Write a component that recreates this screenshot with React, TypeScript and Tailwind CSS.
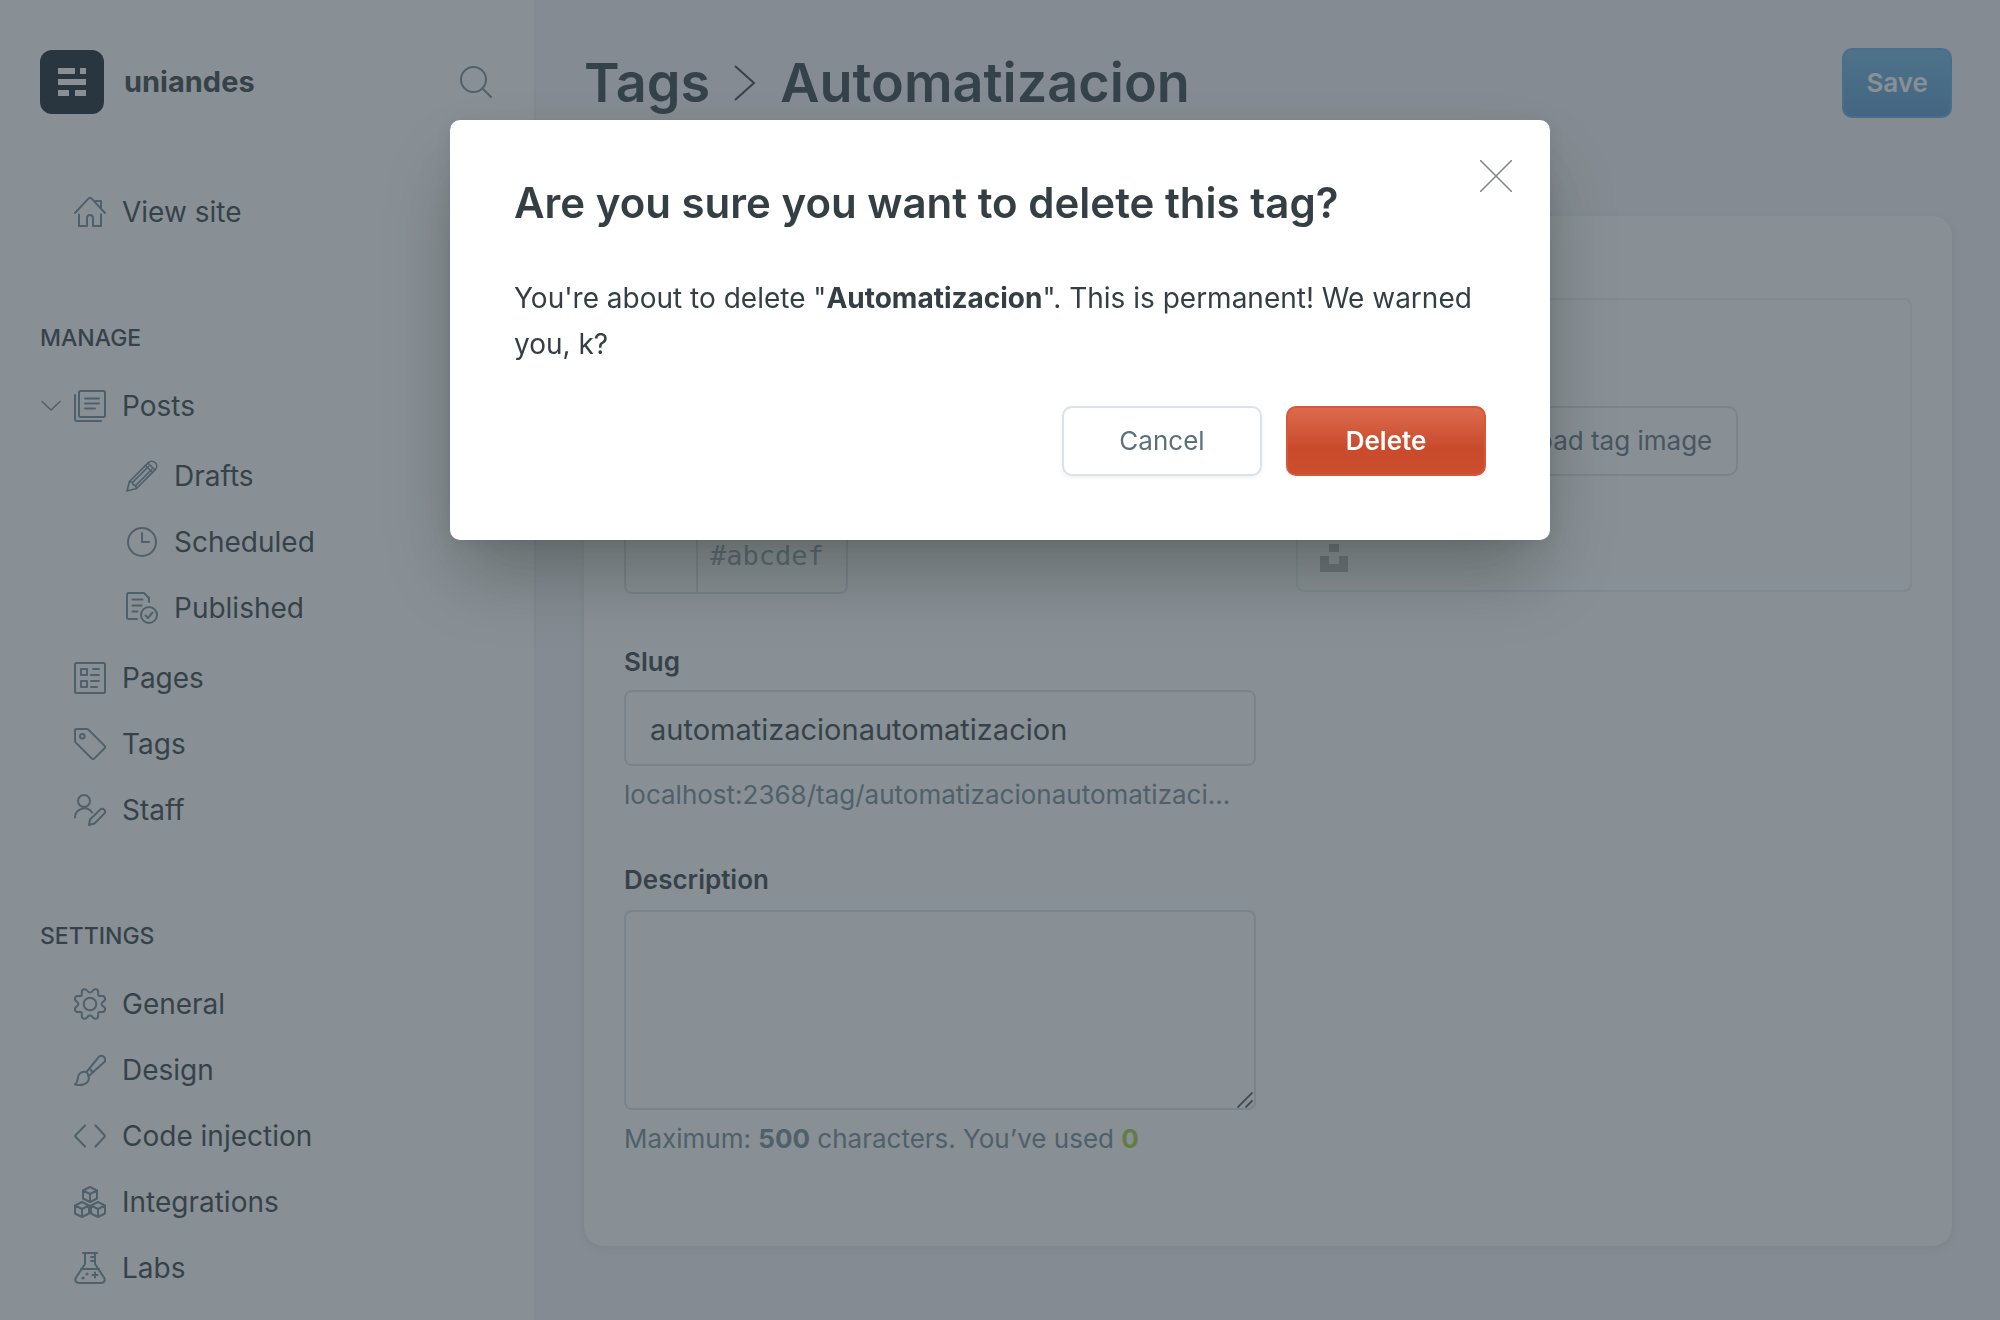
import type { ReactNode } from "react";

function Icon({ children, strokeWidth = 2 }: { children: ReactNode; strokeWidth?: number }) {
  return (
    <svg
      viewBox="0 0 32 32"
      fill="none"
      stroke="currentColor"
      strokeWidth={strokeWidth}
      strokeLinecap="round"
      strokeLinejoin="round"
      aria-hidden="true"
      className="size-8 shrink-0"
    >
      {children}
    </svg>
  );
}

const SearchIcon = () => (
  <Icon>
    <circle cx="13.5" cy="13.5" r="12.5" />
    <path d="M22.500 22.500 31 31" />
  </Icon>
);

const HomeIcon = () => (
  <Icon>
    <path d="M1 17 14.600 2.400a2 2 0 0 1 2.800 0L31 17M5 18.500V30h8v-8a2.500 2.500 0 0 1 6 0v8h8V18.500M21.500 5H27v7" />
  </Icon>
);

const PostsIcon = () => (
  <Icon>
    <rect x="5" y="1" width="26" height="26" rx="1.5" />
    <path d="M1 5v24.500A1.500 1.500 0 0 0 2.500 31H27M11 8.500h14M11 13.500h14M11 18.500h10" />
  </Icon>
);

const PencilIcon = () => (
  <Icon strokeWidth={1.7}>
    <path d="M1 31 3.500 21.500 22.300 2.700a4.950 4.950 0 0 1 7 7L10.500 28.500Z" />
    <path d="M3.500 21.500c2.500.2 3.500.8 3.700 3.300 2.500.2 3.100 1.200 3.300 3.700M6.500 22.500 22.600 6.400M9.600 25.600 25.700 9.500M19.500 5.500l7 7M22 3l7 7" />
  </Icon>
);

const ClockIcon = () => (
  <Icon>
    <circle cx="16" cy="16" r="14" />
    <path d="M16 7v9h7" />
  </Icon>
);

const PublishedIcon = () => (
  <Icon>
    <path d="M11 27H2.500A1.500 1.500 0 0 1 1 25.500v-23A1.500 1.500 0 0 1 2.500 1H18l5 5v4M6.500 7.500h10M6.500 13.500h9M6.500 19.500h5" />
    <circle cx="23" cy="23" r="8" />
    <path d="m19.500 23.500 2.500 2.500 4.500-5.500" />
  </Icon>
);

const PagesIcon = () => (
  <Icon>
    <rect x="1" y="1" width="30" height="30" rx="1.5" />
    <path d="M7 7h6v6H7zM7 19h6v6H7zM19 7h6M17 13h8M17 19h8M17 25h6" />
  </Icon>
);

const TagIcon = () => (
  <Icon>
    <path d="M1 2.500A1.500 1.500 0 0 1 2.500 1H13a2 2 0 0 1 1.400.6L30.400 17.600a2 2 0 0 1 0 2.800l-10 10a2 2 0 0 1-2.800 0L1.600 14.400A2 2 0 0 1 1 13Z" />
    <circle cx="8.3" cy="8.3" r="2.3" />
  </Icon>
);

const StaffIcon = () => (
  <Icon>
    <circle cx="10" cy="7" r="6" />
    <path d="M1 23.500a9.300 9.300 0 0 1 17-5M15 31l1-5.500L26.200 15.600a2.700 2.700 0 0 1 4 4L20.500 29.500Z" />
  </Icon>
);

const GearIcon = () => (
  <Icon>
    <circle cx="16" cy="16" r="6.3" />
    <path d="M16 4.500c1.500 0 2.200-.8 3-2 1-1.800 5-2 5.200 1.200v3c0 1 .2 1.300 1.200 1.300h3c3.200.2 3.400 4 1.200 5.300-1.500.9-2 1.500-2 2.700s.5 1.800 2 2.700c2.200 1.300 2 5.100-1.200 5.300h-3c-1 0-1.200.3-1.200 1.300v3c-.2 3.200-4.200 3-5.200 1.200-.8-1.200-1.500-2-3-2s-2.200.8-3 2c-1 1.800-5 2-5.200-1.200v-3c0-1-.2-1.300-1.200-1.300h-3C.4 23.800.2 20 2.400 18.700c1.500-.9 2-1.500 2-2.700s-.5-1.800-2-2.700C.2 12 .4 8.200 3.600 8h3c1 0 1.200-.3 1.200-1.300v-3C8 .5 12 .7 13 2.500c.8 1.200 1.500 2 3 2Z" />
  </Icon>
);

const BrushIcon = () => (
  <Icon>
    <path d="M12.500 18 25 2.600a3.900 3.900 0 0 1 5.600 5.200L14.800 22M12.500 18c-4-1-8 1-8.500 5-.4 3.500-.5 5.500-3 7.500 5 1.200 9.500.3 12-2 1.600-1.600 2.300-4.300 1.300-6.500a6 6 0 0 0-1.800-4ZM15.500 14.500l3 3.500" />
  </Icon>
);

const CodeIcon = () => (
  <Icon>
    <path d="M11 5.500 1.500 15.200a1.200 1.200 0 0 0 0 1.600L11 26.500M21.500 5.500l9 9.700a1.200 1.200 0 0 1 0 1.600l-9 9.700" />
  </Icon>
);

const CubesIcon = () => (
  <Icon>
    <path d="m16 1 7 3.500v8L16 16l-7-3.500v-8ZM9 4.500 16 8l7-3.500M16 8v8M8 16l7 3.500v8L8 31l-7-3.500v-8ZM1 19.500 8 23l7-3.500M8 23v8M24 16l7 3.500v8L24 31l-7-3.500v-8ZM17 19.500l7 3.500 7-3.500M24 23v8" />
  </Icon>
);

const FlaskIcon = () => (
  <Icon>
    <path d="M9 1h14M11 1v11L2 25.500C.3 28.500 2 31 5 31h22c3 0 4.700-2.500 3-5.500L21 12V1M7 17h18M21 5h-4M21 9h-4M18.500 23h5M21 20.500v5" />
    <circle cx="13" cy="22" r=".6" />
    <circle cx="9" cy="26" r=".6" />
  </Icon>
);

type Item = { label: string; icon: ReactNode; children?: Item[] };

const manage: Item[] = [
  {
    label: "Posts",
    icon: <PostsIcon />,
    children: [
      { label: "Drafts", icon: <PencilIcon /> },
      { label: "Scheduled", icon: <ClockIcon /> },
      { label: "Published", icon: <PublishedIcon /> },
    ],
  },
  { label: "Pages", icon: <PagesIcon /> },
  { label: "Tags", icon: <TagIcon /> },
  { label: "Staff", icon: <StaffIcon /> },
];

const settings: Item[] = [
  { label: "General", icon: <GearIcon /> },
  { label: "Design", icon: <BrushIcon /> },
  { label: "Code injection", icon: <CodeIcon /> },
  { label: "Integrations", icon: <CubesIcon /> },
  { label: "Labs", icon: <FlaskIcon /> },
];

function NavLink({ item }: { item: Item }) {
  return (
    <a href="#" className="flex h-[66px] items-center gap-4 text-[28px]">
      <span className="text-[#738a94]">{item.icon}</span>
      {item.label}
    </a>
  );
}

function NavList({ items }: { items: Item[] }) {
  return (
    <ul>
      {items.map((item) => (
        <li key={item.label}>
          <div className="flex items-center">
            <span className="w-[34px] text-[#738a94]">
              {item.children && (
                <button type="button" aria-label="Toggle posts" className="block w-[22px]">
                  <svg viewBox="0 0 22 12" fill="none" stroke="currentColor" strokeWidth="1.5" strokeLinecap="round" className="block w-[22px]">
                    <path d="m2 1.500 9 8.500 9-8.500" />
                  </svg>
                </button>
              )}
            </span>
            <NavLink item={item} />
          </div>
          {item.children && (
            <ul className="py-1 pl-[86px]">
              {item.children.map((child) => (
                <li key={child.label}>
                  <NavLink item={child} />
                </li>
              ))}
            </ul>
          )}
        </li>
      ))}
    </ul>
  );
}

function Sidebar() {
  return (
    <nav className="flex w-[536px] shrink-0 flex-col border-r-2 border-[#e5eff5] bg-white px-10 pt-[50px]">
      <div className="flex items-center pr-[2px]">
        <span className="flex size-16 items-center justify-center rounded-xl bg-[#15212a] text-white">
          <svg viewBox="0 0 28 28" fill="currentColor" aria-hidden="true" className="size-7">
            <path d="M0 0h17v6H0zM22 0h6v6h-6zM0 11h28v6H0zM0 22h11v6H0zM17 22h11v6H17z" />
          </svg>
        </span>
        <span className="ml-5 flex-1 text-[29px] leading-10 font-bold">uniandes</span>
        <button type="button" aria-label="Search" className="text-[#738a94]">
          <SearchIcon />
        </button>
      </div>

      <a href="#" className="mt-[65px] flex h-[66px] items-center gap-4 pl-[34px] text-[28px]">
        <span className="text-[#738a94]">
          <HomeIcon />
        </span>
        View site
      </a>

      <h2 className="mt-[77px] text-[23px] leading-8 font-medium uppercase">Manage</h2>
      <div className="mt-[19px]">
        <NavList items={manage} />
      </div>

      <h2 className="mt-[77px] text-[23px] leading-8 font-medium uppercase">Settings</h2>
      <div className="mt-[19px]">
        <NavList items={settings} />
      </div>
    </nav>
  );
}

function TagForm() {
  return (
    <form
      onSubmit={(event) => event.preventDefault()}
      className="grid grid-cols-[632px_1fr] gap-x-10 rounded-[20px] bg-white px-10 pt-[82px] pb-[91px] shadow-[0_2px_8px_rgba(0,0,0,0.08)]"
    >
      <div className="flex flex-col text-[26px]">
        <input aria-label="Name" className="mt-10 h-[76px] rounded-lg border-2 border-[#dae3e8] px-6 text-[29px]" />

        <div className="mt-[104px] flex h-[76px] w-[224px] rounded-lg border-2 border-[#dae3e8]">
          <span className="w-[72px] border-r-2 border-[#dae3e8]" />
          <input
            aria-label="Color"
            placeholder="#abcdef"
            className="min-w-0 flex-1 rounded-r-lg px-3 font-['DejaVu_Sans_Mono',monospace] text-[27px] placeholder:text-[#90a3ad]"
          />
        </div>

        <label htmlFor="tag-slug" className="mt-[52px] leading-8 font-semibold">
          Slug
        </label>
        <input
          id="tag-slug"
          defaultValue="automatizacionautomatizacion"
          className="mt-3 h-[76px] rounded-lg border-2 border-[#dae3e8] px-6 pt-[2px] text-[29px]"
        />
        <p className="mt-[13px] truncate leading-8 text-[#738a94]">
          localhost:2368/tag/automatizacionautomatizaci…
        </p>

        <label htmlFor="tag-description" className="mt-[53px] leading-8 font-semibold">
          Description
        </label>
        <div className="relative mt-[14px]">
          <textarea
            id="tag-description"
            className="block h-[200px] w-full resize-none rounded-lg border-2 border-[#dae3e8] px-6 py-4"
          />
          <svg
            viewBox="0 0 16 16"
            fill="none"
            stroke="currentColor"
            strokeWidth="1.8"
            aria-hidden="true"
            className="pointer-events-none absolute right-[3px] bottom-[2px] size-4 text-[#4a5055]"
          >
            <path d="M.5 15.500 15.500.5M8.500 15.500l7-7" />
          </svg>
        </div>
        <p className="mt-[13px] leading-8 text-[#738a94]">
          Maximum: <b className="font-bold">500</b> characters. You’ve used{" "}
          <b className="font-bold text-[#a4d037]">0</b>
        </p>
      </div>

      <div className="flex h-[294px] flex-col rounded-lg border-2 border-[#e5eff5] px-[22px] pt-[106px] pb-[18px]">
        <button type="button" className="self-center rounded-[10px] border-2 border-[#dae3e8] px-6 py-[17px] text-[26px] leading-8 text-[#5c717c]">
          Upload tag image
        </button>
        <button type="button" aria-label="Choose from Unsplash" className="mt-auto self-start text-[#b8bcbe]">
          <svg viewBox="0 0 28 28" fill="currentColor" className="block size-7">
            <path d="M9 0h10v8H9zM0 12h9v8h10v-8h9v16H0z" />
          </svg>
        </button>
      </div>
    </form>
  );
}

function DeleteDialog() {
  return (
    <div className="fixed inset-0 flex items-start justify-center bg-[rgba(56,68,78,0.6)] pt-[120px]">
      <div
        role="dialog"
        aria-modal="true"
        aria-labelledby="dialog-title"
        className="relative w-[1100px] rounded-[10px] bg-white px-16 pt-[54px] pb-16 shadow-[0_40px_70px_-12px_rgba(20,25,10,0.32),0_2px_16px_rgba(0,0,0,0.08)]"
      >
        <h1 id="dialog-title" className="text-[42px] leading-[58px] font-semibold">
          Are you sure you want to delete this tag?
        </h1>
        <button type="button" aria-label="Close" className="absolute top-10 right-[38px] text-[#7d8488]">
          <svg viewBox="0 0 32 32" fill="none" stroke="currentColor" strokeWidth="1.5" className="block size-8">
            <path d="m0 0 32 32M32 0 0 32" />
          </svg>
        </button>
        <p className="mt-[43px] text-[28px] leading-[46px]">
          You're about to delete "<strong className="font-bold">Automatizacion</strong>". This is permanent! We warned you, k?
        </p>
        <div className="mt-[39px] flex justify-end gap-6 text-[26px]">
          <button type="button" className="h-[70px] w-[200px] rounded-[10px] border-2 border-[#dae3e8] pb-[2px] text-[#5c717c] shadow-[0_2px_4px_rgba(0,0,0,0.06)]">
            Cancel
          </button>
          <button
            type="button"
            className="h-[70px] w-[200px] rounded-[10px] border-2 border-[#d6573a] bg-linear-to-b from-[#dc6a4d] via-[#c94b2c] via-60% to-[#cb4e2f] pb-[2px] font-semibold text-white"
          >
            Delete
          </button>
        </div>
      </div>
    </div>
  );
}

export default function App() {
  return (
    <div className="flex min-h-screen bg-[#f4f6f8] font-['Inter',sans-serif] text-[#343f44]">
      <Sidebar />
      <main className="flex-1 px-12 pt-12">
        <header className="flex items-center justify-between">
          <h1 className="flex items-center text-[54px] leading-[70px] font-semibold">
            <a href="#">Tags</a>
            <svg viewBox="0 0 22 36" fill="none" stroke="currentColor" strokeWidth="2" aria-hidden="true" className="mx-6 h-9 w-[22px]">
              <path d="m1 1 19 17L1 35" />
            </svg>
            Automatizacion
          </h1>
          <button
            type="button"
            className="h-[70px] rounded-[10px] border-2 border-[#62ade0] bg-linear-to-b from-[#70b8e4] to-[#5598cf] px-[22px] pb-[2px] text-[26px] font-semibold text-white"
          >
            Save
          </button>
        </header>
        <div className="mt-[98px]">
          <TagForm />
        </div>
      </main>
      <DeleteDialog />
    </div>
  );
}
